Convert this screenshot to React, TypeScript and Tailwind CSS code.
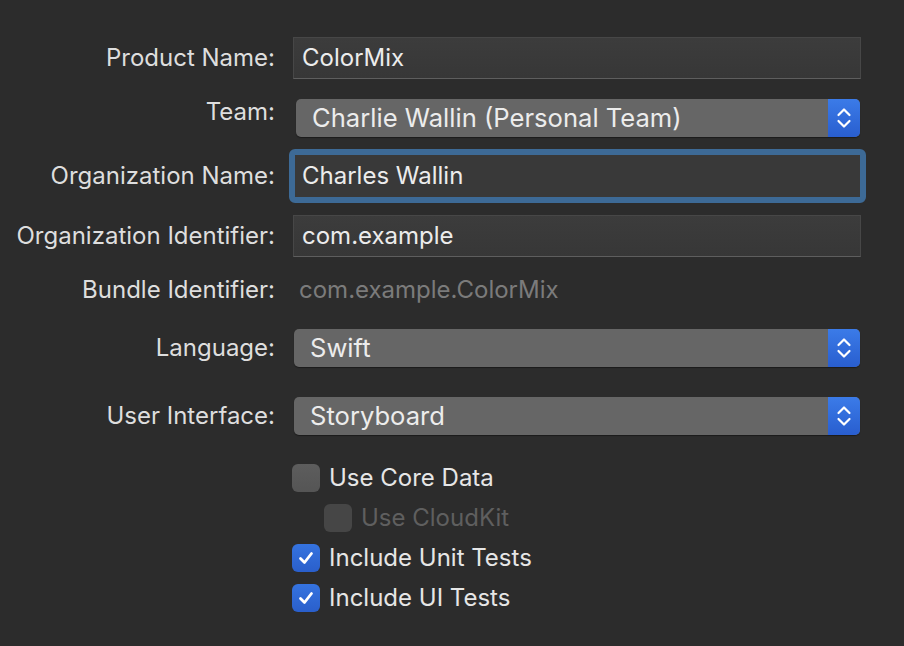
import React from "react";

function Chevrons() {
  return (
    <svg width="16" height="26" viewBox="0 0 16 26" fill="none">
      <path d="M2.5 10 L8 4.5 L13.5 10" stroke="white" strokeWidth="2.2" strokeLinecap="round" strokeLinejoin="round" />
      <path d="M2.5 16 L8 21.5 L13.5 16" stroke="white" strokeWidth="2.2" strokeLinecap="round" strokeLinejoin="round" />
    </svg>
  );
}

function Label({ children, className = "" }: { children: React.ReactNode; className?: string }) {
  return (
    <div className={"w-[275px] shrink-0 text-right text-[#dedede] " + className}>{children}</div>
  );
}

function TextField({ value }: { value: string }) {
  return (
    <div className="flex h-[42px] w-[568px] items-center border border-[#474747] border-b-[#5e5e5e] bg-gradient-to-b from-[#3c3c3c] to-[#373737] pl-[8px] text-[#ececec]">
      {value}
    </div>
  );
}

function Popup({ value, left = 1 }: { value: string; left?: number }) {
  return (
    <div
      className={
        "flex h-[38px] overflow-hidden rounded-[5px] bg-[#666666] shadow-[0_1px_1px_rgba(0,0,0,0.4)] " +
        (left === 3 ? "ml-[3px] w-[564px]" : "ml-[1px] w-[566px]")
      }
    >
      <div className="flex flex-1 items-center pl-[16px] text-[25.6px] text-[#ececec]">{value}</div>
      <div className="flex w-[32px] items-center justify-center bg-gradient-to-b from-[#3b7be8] to-[#295ecf]">
        <Chevrons />
      </div>
    </div>
  );
}

function Check({ label, checked, disabled }: { label: string; checked?: boolean; disabled?: boolean }) {
  return (
    <div className="flex h-[40px] items-center gap-[9px]">
      <div
        className={
          "flex h-[28px] w-[28px] items-center justify-center rounded-[6px] " +
          (checked
            ? "bg-gradient-to-b from-[#3573df] to-[#2a5fcb]"
            : disabled
              ? "bg-[#464646]"
              : "bg-gradient-to-b from-[#5d5d5d] to-[#555555]")
        }
      >
        {checked && (
          <svg width="20" height="20" viewBox="0 0 20 20" fill="none">
            <path d="M4.5 10.5 L8.5 14.5 L15.5 5.5" stroke="white" strokeWidth="2.8" strokeLinecap="round" strokeLinejoin="round" />
          </svg>
        )}
      </div>
      <span className={disabled ? "text-[#5f5f5f]" : "text-[#e6e6e6]"}>{label}</span>
    </div>
  );
}

export default function App() {
  return (
    <main
      className="h-[646px] w-[904px] overflow-hidden bg-[#2c2c2c] text-[24px] leading-none"
      style={{ fontFamily: "Inter, 'Noto Sans', sans-serif" }}
    >
      <div className="flex flex-col pt-[37px]">
        <div className="flex items-center gap-[18px]">
          <Label>Product Name:</Label>
          <TextField value="ColorMix" />
        </div>

        <div className="mt-[20px] flex items-center gap-[18px]">
          <Label className="-translate-y-[6px]">Team:</Label>
          <Popup value="Charlie Wallin (Personal Team)" left={3} />
        </div>

        <div className="mt-[12px] flex items-center gap-[14px]">
          <Label>Organization Name:</Label>
          <div className="rounded-[6px] border-[6px] border-[#3d6a96]">
            <div className="flex h-[42px] w-[565px] items-center bg-[#393939] pl-[7px] text-[#ececec]">
              Charles Wallin
            </div>
          </div>
        </div>

        <div className="mt-[12px] flex items-center gap-[18px]">
          <Label>Organization Identifier:</Label>
          <TextField value="com.example" />
        </div>

        <div className="mt-[13px] flex h-[40px] items-center gap-[24px]">
          <Label>Bundle Identifier:</Label>
          <span className="text-[#7b7b7b]">com.example.ColorMix</span>
        </div>

        <div className="mt-[19px] flex items-center gap-[18px]">
          <Label>Language:</Label>
          <Popup value="Swift" />
        </div>

        <div className="mt-[30px] flex items-center gap-[18px]">
          <Label>User Interface:</Label>
          <Popup value="Storyboard" />
        </div>

        <div className="mt-[23px] flex flex-col pl-[292px]">
          <Check label="Use Core Data" />
          <div className="pl-[32px]">
            <Check label="Use CloudKit" disabled />
          </div>
          <Check label="Include Unit Tests" checked />
          <Check label="Include UI Tests" checked />
        </div>
      </div>
    </main>
  );
}
